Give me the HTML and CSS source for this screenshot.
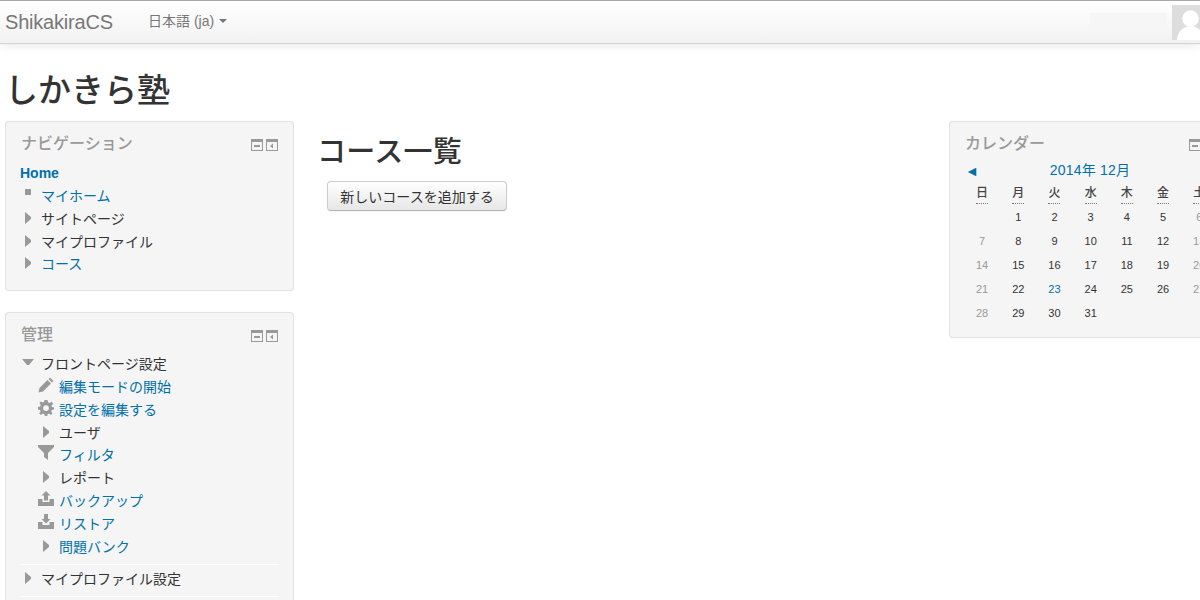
FILE: index.html
```html
<!DOCTYPE html>
<html lang="ja">

<head>
    <meta charset="UTF-8">
    <title>しかきら塾</title>
    <link rel="stylesheet" href="styles.css">
</head>

<body>
    <svg class="defs" width="0" height="0">
        <symbol id="collapsed" viewBox="0 0 6 12"><path d="M0 0 L6 5 V7 L0 12 Z" /></symbol>
        <symbol id="expanded" viewBox="0 0 12 6"><path d="M0 0 H12 L7 6 H5 Z" /></symbol>
        <symbol id="hide" viewBox="0 0 12 12"><path fill-rule="evenodd" d="M0 0 H12 V12 H0 Z M1 3 V11 H11 V3 Z M3 6 H9 V8 H3 Z" /></symbol>
        <symbol id="dock" viewBox="0 0 12 12"><path fill-rule="evenodd" d="M0 0 H12 V12 H0 Z M1 3 V11 H11 V3 Z M7 4.5 L4 7 L7 9.5 Z" /></symbol>
    </svg>

    <header class="navbar">
        <a class="brand">ShikakiraCS</a>
        <a class="lang">日本語 (ja)<span class="caret"></span></a>
        <div class="usermenu">
            <div class="ghost"></div>
            <div class="avatar">
                <svg viewBox="0 0 36 36"><circle cx="19" cy="14" r="8.5" /><path d="M5 36 C6 27 11 23 16 22 H22 C27 23 32 27 33 36 Z" /></svg>
            </div>
        </div>
    </header>

    <div class="page">
        <h1 class="site-title">しかきら塾</h1>

        <div class="columns">
            <aside class="side">
                <section class="block nav-block">
                    <div class="block-head">
                        <h2>ナビゲーション</h2>
                        <div class="controls">
                            <svg><use href="#hide" /></svg>
                            <svg><use href="#dock" /></svg>
                        </div>
                    </div>
                    <a class="home">Home</a>
                    <ul class="tree">
                        <li><span class="ico"><i class="square"></i></span><a>マイホーム</a></li>
                        <li><span class="ico"><svg class="arrow"><use href="#collapsed" /></svg></span>サイトページ</li>
                        <li><span class="ico"><svg class="arrow"><use href="#collapsed" /></svg></span>マイプロファイル</li>
                        <li><span class="ico"><svg class="arrow"><use href="#collapsed" /></svg></span><a>コース</a></li>
                    </ul>
                </section>

                <section class="block admin-block">
                    <div class="block-head">
                        <h2>管理</h2>
                        <div class="controls">
                            <svg><use href="#hide" /></svg>
                            <svg><use href="#dock" /></svg>
                        </div>
                    </div>
                    <ul class="tree">
                        <li><span class="ico"><svg class="arrow-down"><use href="#expanded" /></svg></span>フロントページ設定</li>
                    </ul>
                    <ul class="tree sub">
                        <li>
                            <span class="ico">
                                <svg class="tool" viewBox="0 0 16 16"><path d="M12 0.5 L15.5 4 L14 5.5 L10.5 2 Z M9.5 3 L13 6.5 L5 14.5 L0.5 15.5 L1.5 11 Z" /></svg>
                            </span><a>編集モードの開始</a>
                        </li>
                        <li>
                            <span class="ico">
                                <svg class="tool" viewBox="0 0 16 16"><path fill-rule="evenodd" d="M6.5 0 H9.5 L10 2.3 L11.8 3 L13.8 1.8 L14.2 2.2 L15.2 4 L13.4 5.5 L13.8 7 L16 7.5 V9.5 L13.8 10 L13.2 11.6 L14.4 13.6 L13 15 L11 13.6 L9.6 14.2 L9.2 16 H6.8 L6.4 14.2 L4.8 13.6 L3 15 L1.2 13.4 L2.6 11.6 L2 10 L0 9.5 V7 L2.2 6.5 L2.8 5 L1.4 3 L3 1.6 L4.8 2.6 L6 2 Z M8 5.2 A2.9 2.9 0 1 0 8 11 A2.9 2.9 0 1 0 8 5.2 Z" /></svg>
                            </span><a>設定を編集する</a>
                        </li>
                        <li><span class="ico"><svg class="arrow"><use href="#collapsed" /></svg></span>ユーザ</li>
                        <li>
                            <span class="ico">
                                <svg class="tool" viewBox="0 0 16 16"><path d="M0 0 H16 V2 L10 8 V15 L6 12 V8 L0 2 Z" /></svg>
                            </span><a>フィルタ</a>
                        </li>
                        <li><span class="ico"><svg class="arrow"><use href="#collapsed" /></svg></span>レポート</li>
                        <li>
                            <span class="ico">
                                <svg class="tool" viewBox="0 0 16 16"><path d="M8 0 L12.5 4.5 H10 V9.5 H6 V4.5 H3.5 Z M0 8 H4.5 V11 H11.5 V8 H16 V15 H0 Z" /></svg>
                            </span><a>バックアップ</a>
                        </li>
                        <li>
                            <span class="ico">
                                <svg class="tool" viewBox="0 0 16 16"><path d="M6 0 H10 V5 H12.5 L8 9.5 L3.5 5 H6 Z M0 8 H4.5 V11 H11.5 V8 H16 V15 H0 Z" /></svg>
                            </span><a>リストア</a>
                        </li>
                        <li><span class="ico"><svg class="arrow"><use href="#collapsed" /></svg></span><a>問題バンク</a></li>
                    </ul>
                    <ul class="tree divided">
                        <li><span class="ico"><svg class="arrow"><use href="#collapsed" /></svg></span>マイプロファイル設定</li>
                    </ul>
                </section>
            </aside>

            <main class="content">
                <h2 class="course-title">コース一覧</h2>
                <button class="btn">新しいコースを追加する</button>
            </main>

            <aside class="side">
                <section class="block cal-block">
                    <div class="block-head">
                        <h2>カレンダー</h2>
                        <div class="controls">
                            <svg><use href="#hide" /></svg>
                            <svg><use href="#dock" /></svg>
                        </div>
                    </div>
                    <div class="cal-month">
                        <span class="prev">◄</span>
                        <a>2014年 12月</a>
                    </div>
                    <div class="cal-grid">
                        <abbr>日</abbr><abbr>月</abbr><abbr>火</abbr><abbr>水</abbr><abbr>木</abbr><abbr>金</abbr><abbr>土</abbr>
                        <span></span><span>1</span><span>2</span><span>3</span><span>4</span><span>5</span><span class="we">6</span>
                        <span class="we">7</span><span>8</span><span>9</span><span>10</span><span>11</span><span>12</span><span class="we">13</span>
                        <span class="we">14</span><span>15</span><span>16</span><span>17</span><span>18</span><span>19</span><span class="we">20</span>
                        <span class="we">21</span><span>22</span><span class="today">23</span><span>24</span><span>25</span><span>26</span><span class="we">27</span>
                        <span class="we">28</span><span>29</span><span>30</span><span>31</span><span></span><span></span><span></span>
                    </div>
                </section>
            </aside>
        </div>
    </div>
</body>

</html>
```

FILE: styles.css
```css
* {
    margin: 0;
    padding: 0;
    box-sizing: border-box;
}

html,
body {
    height: 100%;
    overflow: hidden;
}

body {
    background: #fff;
    color: #333;
    font-family: "Liberation Sans", "Noto Sans CJK JP", sans-serif;
    font-size: 14px;
}

a {
    color: #0070a8;
    text-decoration: none;
}

.defs {
    display: block;
}

/* top bar */
.navbar {
    display: flex;
    align-items: center;
    width: 1200px;
    height: 44px;
    padding-left: 5px;
    background: linear-gradient(#fff, #f2f2f2);
    border-top: 1px solid #a8a8a8;
    border-bottom: 1px solid #d4d4d4;
    box-shadow: 0 1px 10px rgba(0, 0, 0, 0.1);
}

.brand {
    width: 143px;
    color: #777;
    font-size: 20px;
    letter-spacing: -0.2px;
}

.lang {
    margin-top: -4px;
    color: #777;
    font-size: 14px;
}

.caret {
    display: inline-block;
    margin-left: 5px;
    vertical-align: 3px;
    border-top: 4px solid #777;
    border-left: 4px solid transparent;
    border-right: 4px solid transparent;
}

.usermenu {
    display: flex;
    align-items: center;
    gap: 5px;
    margin-left: auto;
}

.ghost {
    width: 77px;
    height: 19px;
    background: #f6f6f6;
}

.avatar {
    width: 35px;
    height: 35px;
    margin-right: -7px;
    background: #ddd;
    overflow: hidden;
}

.avatar svg {
    display: block;
    width: 35px;
    height: 35px;
    fill: #fff;
}

/* page */
.page {
    width: 1243px;
    padding: 0 5px;
}

.site-title {
    margin: 27px 0 10px;
    font-size: 33px;
    font-weight: 500;
    line-height: 40px;
}

.columns {
    display: grid;
    grid-template-columns: 289px 1fr 289px;
    column-gap: 24px;
    align-items: start;
}

.block {
    margin-bottom: 21px;
    padding: 10px 14px 14px;
    background: #f5f5f5;
    border: 1px solid #e3e3e3;
    border-radius: 4px;
    box-shadow: 0 0 1px rgba(0, 0, 0, 0.1);
}

.block-head {
    display: flex;
    justify-content: space-between;
    align-items: center;
    height: 24px;
    padding-left: 1px;
}

.block-head h2 {
    color: #999;
    font-size: 16px;
    font-weight: 500;
    line-height: 24px;
}

.controls {
    display: flex;
    gap: 3px;
    margin-top: 2px;
    margin-right: 1px;
}

.controls svg {
    width: 12px;
    height: 12px;
    fill: #999;
}

/* navigation tree */
.home {
    display: block;
    margin-top: 6px;
    font-weight: bold;
    line-height: 23px;
}

.tree {
    list-style: none;
    line-height: 22.8px;
}

.tree li {
    display: flex;
    align-items: center;
    height: 22.8px;
    white-space: nowrap;
}

.ico {
    display: flex;
    justify-content: flex-start;
    align-items: flex-start;
    width: 21px;
    height: 22.8px;
    padding-top: 4px;
}

.arrow {
    width: 6px;
    height: 12px;
    margin-left: 5px;
    fill: #999;
}

.arrow-down {
    width: 12px;
    height: 6px;
    margin-top: 2px;
    margin-left: 2px;
    fill: #999;
}

.square {
    display: block;
    width: 6px;
    height: 6px;
    margin-left: 5px;
    background: #999;
}

.sub {
    padding-left: 18px;
}

.tool {
    width: 16px;
    height: 16px;
    margin-top: -3px;
    fill: #999;
}

.admin-block .tree:first-of-type {
    margin-top: 6px;
}

.divided {
    margin-top: 6px;
    padding: 3px 0 5px;
    border-top: 1px solid #fff;
    border-bottom: 1px solid #fff;
}

/* main column */
.course-title {
    margin-top: 11px;
    margin-left: -1px;
    font-size: 29px;
    font-weight: 500;
    line-height: 40px;
    letter-spacing: 0.3px;
}

.btn {
    display: block;
    width: 180px;
    height: 30px;
    margin: 9px 0 0 9px;
    background: linear-gradient(#fff, #e6e6e6);
    border: 1px solid #ccc;
    border-bottom-color: #b3b3b3;
    border-radius: 4px;
    box-shadow: 0 1px 2px rgba(0, 0, 0, 0.05);
    color: #333;
    font-family: inherit;
    font-size: 14px;
}

/* calendar */
.cal-block {
    padding-bottom: 12px;
}

.cal-block .controls {
    margin-right: 7px;
}

.cal-month {
    position: relative;
    margin-top: 2px;
    height: 24px;
    padding-right: 7px;
    text-align: center;
    font-size: 14px;
    line-height: 24px;
    letter-spacing: 0.2px;
}

.prev {
    position: absolute;
    left: 1px;
    top: 1px;
    color: #0070a8;
    font-size: 14px;
}

.cal-grid {
    display: grid;
    grid-template-columns: repeat(7, 36.2px);
    grid-template-rows: 23px;
    grid-auto-rows: 24px;
    text-align: center;
    font-size: 11px;
    line-height: 24px;
    color: #333;
}

.cal-grid abbr {
    justify-self: center;
    height: 19px;
    margin-top: 3px;
    font-size: 12px;
    line-height: 17px;
    font-weight: 500;
    color: #444;
    border-bottom: 1px dotted #777;
}

.we {
    color: #999;
}

.today {
    color: #0070a8;
}
```
